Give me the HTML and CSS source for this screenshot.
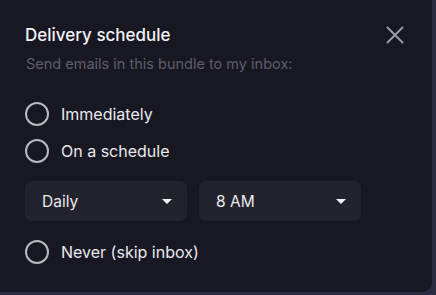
FILE: index.html
```html
<!DOCTYPE html>
<html>
<head>
<meta charset="utf-8">
<link rel="stylesheet" href="styles.css">
</head>
<body>
<div class="panel">
  <div class="header">
    <div class="titles">
      <h1 class="title">Delivery schedule</h1>
      <p class="subtitle">Send emails in this bundle to my inbox:</p>
    </div>
    <button class="close" aria-label="Close">
      <svg width="18" height="18" viewBox="0 0 18 18"><path d="M1.5 1.5L16.5 16.5M16.5 1.5L1.5 16.5" stroke="#9a9aa5" stroke-width="2" stroke-linecap="round"/></svg>
    </button>
  </div>
  <div class="options">
    <label class="option"><span class="radio"></span><span class="label">Immediately</span></label>
    <label class="option"><span class="radio"></span><span class="label">On a schedule</span></label>
    <div class="selects">
      <div class="select"><span>Daily</span><span class="caret"></span></div>
      <div class="select"><span>8 AM</span><span class="caret"></span></div>
    </div>
    <label class="option"><span class="radio"></span><span class="label">Never (skip inbox)</span></label>
  </div>
</div>
</body>
</html>
```
FILE: styles.css
```css
html, body {
  margin: 0;
  padding: 0;
  background: #2a2a44;
  height: 295px;
  overflow: hidden;
}
body {
  font-family: Inter, "Noto Sans", sans-serif;
}
.panel {
  width: 432px;
  height: 292px;
  background: #181822;
  border-bottom-right-radius: 10px;
  box-sizing: border-box;
  padding: 23px 0 0 25px;
}
.header {
  display: flex;
  justify-content: space-between;
  align-items: flex-start;
  padding-right: 28px;
}
.title {
  margin: 0;
  font-size: 17px;
  font-weight: 500;
  color: #f2f2f5;
  line-height: 24px;
}
.subtitle {
  margin: 8px 0 0 1px;
  font-size: 14.5px;
  color: #5e5e6b;
  line-height: 18px;
}
.close {
  background: none;
  border: 0;
  padding: 0;
  margin-top: 3px;
  width: 18px;
  height: 18px;
  display: flex;
}
.options {
  margin-top: 29px;
  display: flex;
  flex-direction: column;
}
.option {
  display: flex;
  align-items: center;
  height: 24px;
  margin-bottom: 13px;
}
.radio {
  width: 20px;
  height: 20px;
  border: 2px solid #b9b9c2;
  border-radius: 50%;
  box-sizing: content-box;
  margin-right: 12px;
}
.label {
  font-size: 16px;
  color: #e9e9ee;
}
.selects {
  display: flex;
  gap: 12px;
  margin-top: 5px;
  margin-bottom: 19px;
}
.select {
  width: 162px;
  height: 40px;
  background: #23232d;
  border-radius: 7px;
  box-sizing: border-box;
  padding: 0 15px 0 17px;
  display: flex;
  align-items: center;
  justify-content: space-between;
  font-size: 15.5px;
  color: #eaeaee;
}
.caret {
  width: 0;
  height: 0;
  border-left: 5px solid transparent;
  border-right: 5px solid transparent;
  border-top: 5px solid #f2f2f5;
}
```
